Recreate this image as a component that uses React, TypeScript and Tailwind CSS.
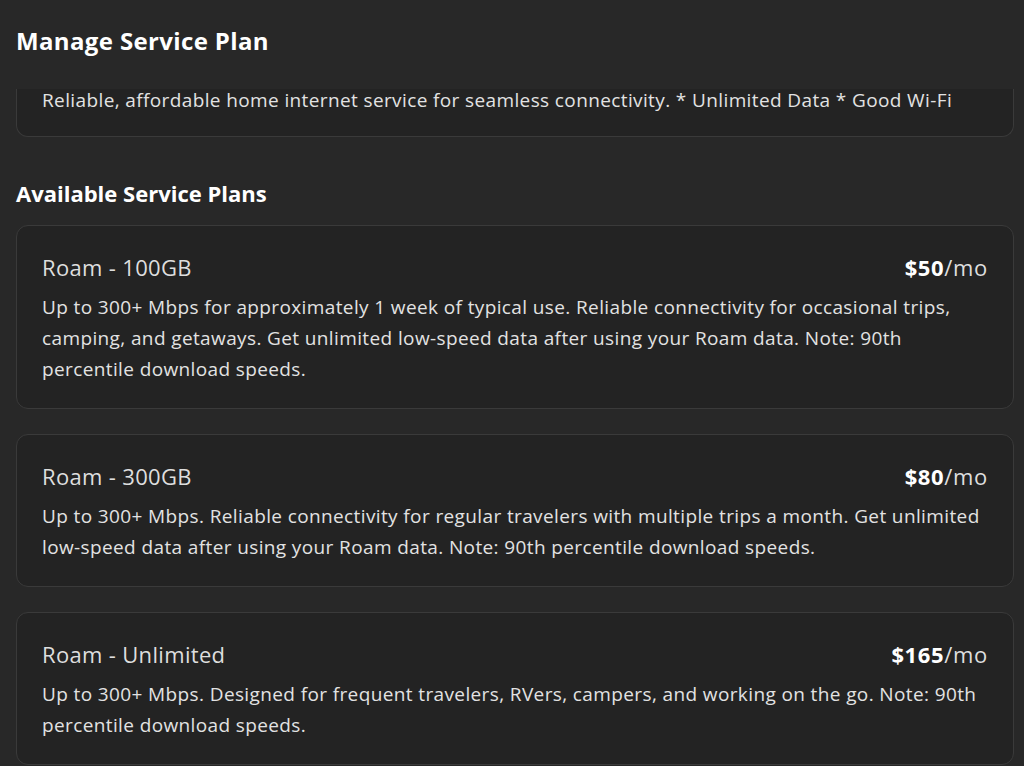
const plans = [
  {
    name: 'Roam - 100GB',
    price: '$50',
    description:
      'Up to 300+ Mbps for approximately 1 week of typical use. Reliable connectivity for occasional trips, camping, and getaways. Get unlimited low-speed data after using your Roam data. Note: 90th percentile download speeds.',
  },
  {
    name: 'Roam - 300GB',
    price: '$80',
    description:
      'Up to 300+ Mbps. Reliable connectivity for regular travelers with multiple trips a month. Get unlimited low-speed data after using your Roam data. Note: 90th percentile download speeds.',
  },
  {
    name: 'Roam - Unlimited',
    price: '$165',
    description:
      'Up to 300+ Mbps. Designed for frequent travelers, RVers, campers, and working on the go. Note: 90th percentile download speeds.',
  },
]

export default function App() {
  return (
    <div
      className="h-[766px] overflow-hidden bg-[#282828] text-[#e2e2e2]"
      style={{ fontFamily: '"Open Sans", "Noto Sans", sans-serif' }}
    >
      {/* Header */}
      <div className="h-[89px] px-4 pt-[25px]">
        <h1 className="text-[24px] font-bold leading-[32px] tracking-[0.015em] text-white">Manage Service Plan</h1>
      </div>

      <div className="pl-4 pr-[10px]">
        {/* Current plan card, scrolled under the header */}
        <div className="rounded-b-xl border-x border-b border-[#3a3a3a] bg-[#232323] px-[25px] pb-[25px]">
          <p className="text-[19px] leading-[22px] tracking-[0.02em]">
            Reliable, affordable home internet service for seamless connectivity. * Unlimited Data * Good Wi-Fi
          </p>
        </div>

        <h2 className="mt-[41px] text-[22px] font-bold leading-[30px] text-white">Available Service Plans</h2>

        <div className="mt-[17px] flex flex-col gap-[25px]">
          {plans.map((plan) => (
            <div
              key={plan.name}
              className="rounded-xl border border-[#3a3a3a] bg-[#232323] px-[25px] pb-[23px] pt-[26px]"
            >
              <div className="flex items-center justify-between">
                <span className="text-[22px] leading-[30px] tracking-[0.015em] text-[#dedede]">{plan.name}</span>
                <span className="text-[22px] leading-[30px] tracking-[0.03em] text-[#dedede]">
                  <span className="font-bold text-white">{plan.price}</span>/mo
                </span>
              </div>
              <p className="mt-[10px] text-[19px] leading-[31px] tracking-[0.02em]">{plan.description}</p>
            </div>
          ))}
        </div>
      </div>
    </div>
  )
}
